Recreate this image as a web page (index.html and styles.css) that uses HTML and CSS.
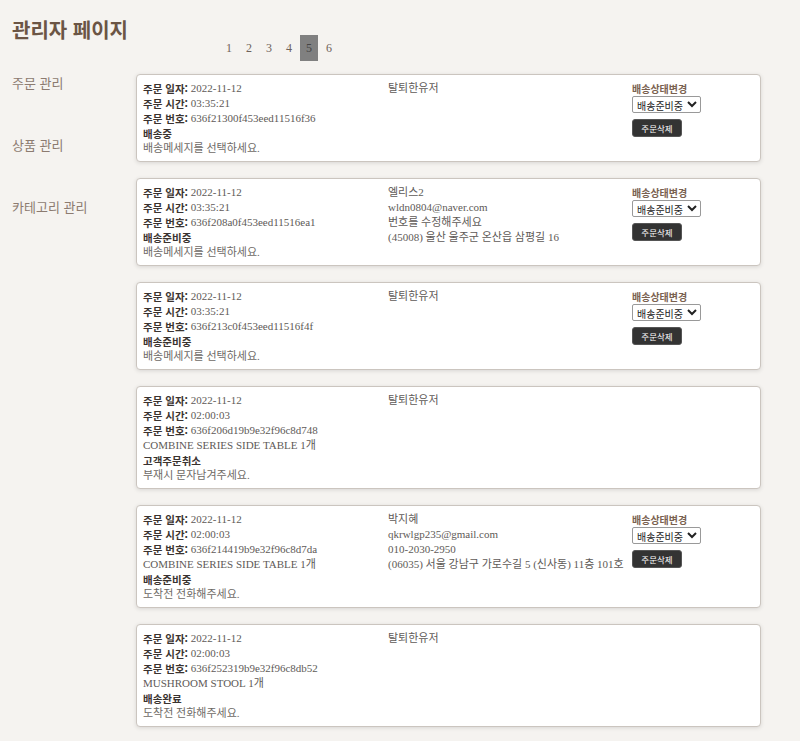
FILE: index.html
```html
<!DOCTYPE html>
<html lang="ko">
<head>
<meta charset="utf-8">
<title>관리자 페이지</title>
<link rel="stylesheet" href="styles.css">
</head>
<body>
<header class="top">
  <h1 class="title">관리자 페이지</h1>
  <nav class="pager">
    <span class="pg">1</span><span class="pg">2</span><span class="pg">3</span><span class="pg">4</span><span class="pg active">5</span><span class="pg">6</span>
  </nav>
</header>
<div class="layout">
  <aside class="side">
    <a class="side-item">주문 관리</a>
    <a class="side-item">상품 관리</a>
    <a class="side-item">카테고리 관리</a>
  </aside>
  <main class="orders">
    <section class="card">
      <div class="col">
        <div><b>주문 일자:</b> 2022-11-12</div>
        <div><b>주문 시간:</b> 03:35:21</div>
        <div><b>주문 번호:</b> 636f21300f453eed11516f36</div>
        <div class="status">배송중</div>
        <div class="msg">배송메세지를 선택하세요.</div>
      </div>
      <div class="col"><div>탈퇴한유저</div></div>
      <div class="col ctrl">
        <div class="ctrl-label">배송상태변경</div>
        <select class="sel"><option>배송준비중</option></select>
        <button class="del">주문삭제</button>
      </div>
    </section>
    <section class="card">
      <div class="col">
        <div><b>주문 일자:</b> 2022-11-12</div>
        <div><b>주문 시간:</b> 03:35:21</div>
        <div><b>주문 번호:</b> 636f208a0f453eed11516ea1</div>
        <div class="status">배송준비중</div>
        <div class="msg">배송메세지를 선택하세요.</div>
      </div>
      <div class="col">
        <div>엘리스2</div>
        <div>wldn0804@naver.com</div>
        <div>번호를 수정해주세요</div>
        <div>(45008) 울산 울주군 온산읍 삼평길 16</div>
      </div>
      <div class="col ctrl">
        <div class="ctrl-label">배송상태변경</div>
        <select class="sel"><option>배송준비중</option></select>
        <button class="del">주문삭제</button>
      </div>
    </section>
    <section class="card">
      <div class="col">
        <div><b>주문 일자:</b> 2022-11-12</div>
        <div><b>주문 시간:</b> 03:35:21</div>
        <div><b>주문 번호:</b> 636f213c0f453eed11516f4f</div>
        <div class="status">배송준비중</div>
        <div class="msg">배송메세지를 선택하세요.</div>
      </div>
      <div class="col"><div>탈퇴한유저</div></div>
      <div class="col ctrl">
        <div class="ctrl-label">배송상태변경</div>
        <select class="sel"><option>배송준비중</option></select>
        <button class="del">주문삭제</button>
      </div>
    </section>
    <section class="card">
      <div class="col">
        <div><b>주문 일자:</b> 2022-11-12</div>
        <div><b>주문 시간:</b> 02:00:03</div>
        <div><b>주문 번호:</b> 636f206d19b9e32f96c8d748</div>
        <div>COMBINE SERIES SIDE TABLE 1개</div>
        <div class="status">고객주문취소</div>
        <div class="msg">부재시 문자남겨주세요.</div>
      </div>
      <div class="col"><div>탈퇴한유저</div></div>
      <div class="col ctrl"></div>
    </section>
    <section class="card">
      <div class="col">
        <div><b>주문 일자:</b> 2022-11-12</div>
        <div><b>주문 시간:</b> 02:00:03</div>
        <div><b>주문 번호:</b> 636f214419b9e32f96c8d7da</div>
        <div>COMBINE SERIES SIDE TABLE 1개</div>
        <div class="status">배송준비중</div>
        <div class="msg">도착전 전화해주세요.</div>
      </div>
      <div class="col">
        <div>박지혜</div>
        <div>qkrwlgp235@gmail.com</div>
        <div>010-2030-2950</div>
        <div>(06035) 서울 강남구 가로수길 5 (신사동) 11층 101호</div>
      </div>
      <div class="col ctrl">
        <div class="ctrl-label">배송상태변경</div>
        <select class="sel"><option>배송준비중</option></select>
        <button class="del">주문삭제</button>
      </div>
    </section>
    <section class="card">
      <div class="col">
        <div><b>주문 일자:</b> 2022-11-12</div>
        <div><b>주문 시간:</b> 02:00:03</div>
        <div><b>주문 번호:</b> 636f252319b9e32f96c8db52</div>
        <div>MUSHROOM STOOL 1개</div>
        <div class="status">배송완료</div>
        <div class="msg">도착전 전화해주세요.</div>
      </div>
      <div class="col"><div>탈퇴한유저</div></div>
      <div class="col ctrl"></div>
    </section>
  </main>
</div>
</body>
</html>
```
FILE: styles.css
```css
* { box-sizing: border-box; }
html, body { background: #f5f3f0; }
body {
  margin: 0;
  font-family: "Liberation Serif", "Noto Sans CJK KR", serif;
  color: #555;
}
.top { padding: 17px 0 0 12px; }
.title {
  margin: 0;
  font-family: "Noto Sans CJK KR", sans-serif;
  font-size: 20px;
  line-height: 26px;
  font-weight: 700;
  color: #6b5545;
}
.pager {
  display: flex;
  margin: -8px 0 0 207px;
  height: 26px;
  align-items: stretch;
}
.pg {
  display: flex;
  align-items: center;
  justify-content: center;
  width: 20px;
  font-size: 12px;
  color: #6f625a;
}
.pg.active {
  background: #808080;
  color: #444;
  width: 18px;
  margin: 0 1px;
}
.layout {
  display: flex;
  margin-top: 13px;
}
.side {
  width: 136px;
  flex: none;
  padding: 0 0 0 12px;
  display: flex;
  flex-direction: column;
  gap: 42px;
}
.side-item {
  font-family: "Noto Sans CJK KR", sans-serif;
  font-size: 13px;
  line-height: 20px;
  color: #8c7b70;
}
.side-item:first-child { margin-top: -1px; }
.orders {
  width: 625px;
  display: flex;
  flex-direction: column;
  gap: 16px;
  padding-bottom: 15px;
}
.card {
  display: grid;
  grid-template-columns: 245px 244px 1fr;
  background: #fff;
  border: 1px solid #cbc5bf;
  border-radius: 4px;
  box-shadow: 0 1px 4px rgba(0,0,0,0.12);
  padding: 6px 6px 5px 6px;
  font-size: 11px;
  line-height: 15px;
  color: #5e5a57;
}
.col > div { line-height: 15px; }
.col b {
  vertical-align: top;
  line-height: 15px;
}
.col b, .status {
  font-family: "Noto Sans CJK KR", sans-serif;
  font-weight: 700;
  color: #3a3330;
  font-size: 10.5px;
}
.msg { color: #6e6a66; }
.ctrl { display: flex; flex-direction: column; align-items: flex-start; }
.ctrl-label {
  font-family: "Noto Sans CJK KR", sans-serif;
  font-weight: 700;
  font-size: 10px;
  line-height: 14px;
  color: #7a6150;
}
.sel {
  width: 69px;
  height: 17px;
  font-family: "Noto Sans CJK KR", sans-serif;
  font-size: 10px;
  padding: 0;
  border: 1px solid #999;
  border-radius: 2px;
  background: #fff;
  color: #222;
}
.del {
  margin-top: 6px;
  width: 50px;
  height: 18px;
  background: #333;
  color: #fff;
  border: 1px solid #555;
  border-radius: 3px;
  font-family: "Noto Sans CJK KR", sans-serif;
  font-size: 8.5px;
  padding: 0;
}
```
